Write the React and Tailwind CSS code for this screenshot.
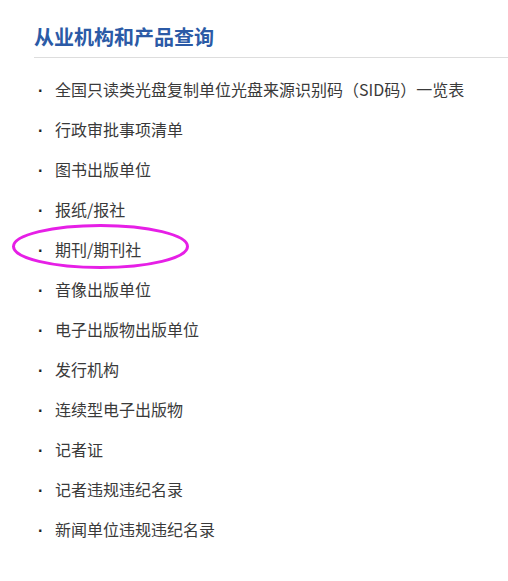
import React from "react";

const items = [
  "全国只读类光盘复制单位光盘来源识别码（SID码）一览表",
  "行政审批事项清单",
  "图书出版单位",
  "报纸/报社",
  "期刊/期刊社",
  "音像出版单位",
  "电子出版物出版单位",
  "发行机构",
  "连续型电子出版物",
  "记者证",
  "记者违规违纪名录",
  "新闻单位违规违纪名录",
];

export default function App() {
  return (
    <div
      className="relative w-[508px] h-[581px] bg-white overflow-hidden pl-[34px] pt-[22px]"
      style={{ fontFamily: '"Noto Sans CJK SC", "Microsoft YaHei", sans-serif' }}
    >
      <div className="border-b border-[#dddddd] pb-[5px]">
        <h1 className="text-[20px] leading-[30px] font-bold text-[#2b5aa6]">
          从业机构和产品查询
        </h1>
      </div>
      <ul className="mt-[11px]">
        {items.map((t) => (
          <li key={t} className="flex items-center h-[40px] text-[16px] text-[#3a3a3a]">
            <span
              className="relative top-[2px] w-[21px] pl-[4px] shrink-0 text-[#222222] font-bold"
              style={{ fontFamily: '"Liberation Sans", Arial, sans-serif' }}
            >
              ·
            </span>
            <span className="whitespace-nowrap">{t}</span>
          </li>
        ))}
      </ul>
      <svg
        className="absolute left-0 top-0 pointer-events-none"
        width="508"
        height="581"
        viewBox="0 0 508 581"
      >
        <ellipse cx="100.5" cy="246.5" rx="87" ry="21" fill="none" stroke="#e61fe6" strokeWidth="3" />
      </svg>
    </div>
  );
}
